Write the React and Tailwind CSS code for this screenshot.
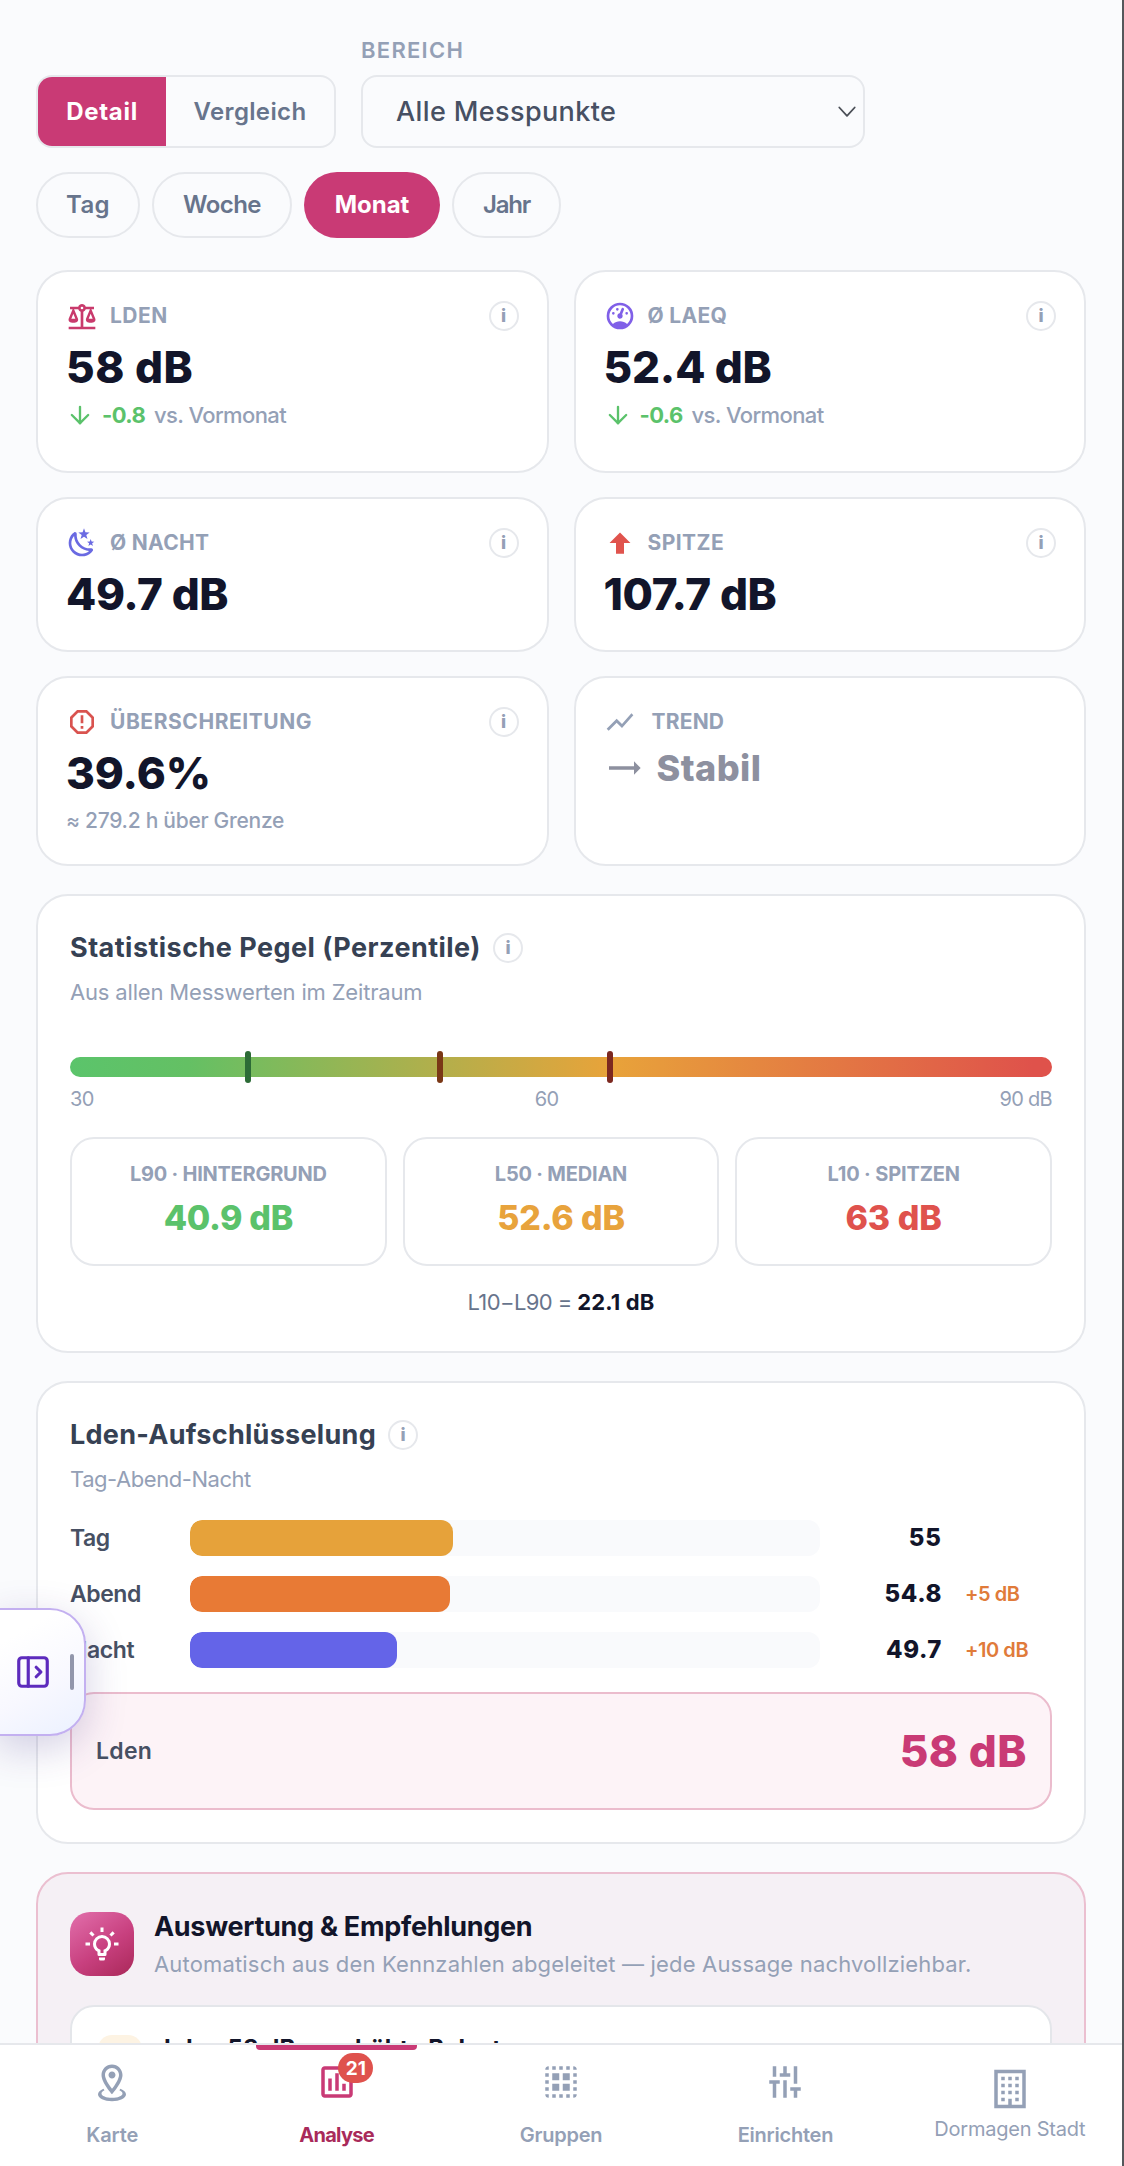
import React from "react";
import { ArrowDown, PanelLeftOpen } from "lucide-react";

const paths = {
  scale: "M12,3C10.73,3 9.6,3.8 9.18,5H3V7H4.95L2,14C1.53,16 3,17 5.5,17C8,17 9.56,16 9,14L6.05,7H9.17C9.5,7.85 10.15,8.5 11,8.83V20H2V22H22V20H13V8.82C13.85,8.5 14.5,7.85 14.82,7H17.95L15,14C14.53,16 16,17 18.5,17C21,17 22.56,16 22,14L19.05,7H21V5H14.83C14.4,3.8 13.27,3 12,3M12,5A1,1 0 0,1 13,6A1,1 0 0,1 12,7A1,1 0 0,1 11,6A1,1 0 0,1 12,5M5.5,10.25L7,14H4L5.5,10.25M18.5,10.25L20,14H17L18.5,10.25Z",
  gauge: "M12,2A10,10 0 0,0 2,12A10,10 0 0,0 12,22A10,10 0 0,0 22,12A10,10 0 0,0 12,2M12,4A8,8 0 0,1 20,12C20,14.4 19,16.5 17.3,18C15.9,16.7 14,16 12,16C10,16 8.2,16.7 6.7,18C5,16.5 4,14.4 4,12A8,8 0 0,1 12,4M14,5.89C13.62,5.9 13.26,6.15 13.1,6.54L11.81,9.77L11.71,10C11,10.13 10.41,10.6 10.14,11.26C9.73,12.29 10.23,13.45 11.26,13.86C12.29,14.27 13.45,13.77 13.86,12.74C14.12,12.08 14,11.32 13.57,10.76L13.67,10.5L14.96,7.29L14.97,7.26C15.17,6.75 14.92,6.17 14.41,5.96C14.28,5.91 14.15,5.89 14,5.89M10,6A1,1 0 0,0 9,7A1,1 0 0,0 10,8A1,1 0 0,0 11,7A1,1 0 0,0 10,6M7,9A1,1 0 0,0 6,10A1,1 0 0,0 7,11A1,1 0 0,0 8,10A1,1 0 0,0 7,9M17,9A1,1 0 0,0 16,10A1,1 0 0,0 17,11A1,1 0 0,0 18,10A1,1 0 0,0 17,9Z",
  night: "M17.75,4.09L15.22,6.03L16.13,9.09L13.5,7.28L10.87,9.09L11.78,6.03L9.25,4.09L12.44,4L13.5,1L14.56,4L17.75,4.09M21.25,11L19.61,12.25L20.2,14.23L18.5,13.06L16.8,14.23L17.39,12.25L15.75,11L17.81,10.95L18.5,9L19.19,10.95L21.25,11M18.97,15.95C19.8,15.87 20.69,17.05 20.16,17.8C19.84,18.25 19.5,18.67 19.08,19.07C15.17,23 8.84,23 4.94,19.07C1.03,15.17 1.03,8.83 4.94,4.93C5.34,4.53 5.76,4.17 6.21,3.85C6.96,3.32 8.14,4.21 8.06,5.04C7.79,7.9 8.75,10.87 10.95,13.06C13.14,15.26 16.1,16.22 18.97,15.95M17.33,17.97C14.5,17.81 11.7,16.64 9.53,14.5C7.36,12.31 6.2,9.5 6.04,6.68C3.23,9.82 3.34,14.64 6.35,17.66C9.37,20.67 14.19,20.78 17.33,17.97Z",
  arrowUp: "M15,20H9V12H4.16L12,4.16L19.84,12H15V20Z",
  octagon: "M8.27,3L3,8.27V15.73L8.27,21H15.73L21,15.73V8.27L15.73,3M9.1,5H14.9L19,9.1V14.9L14.9,19H9.1L5,14.9V9.1M11,15H13V17H11V15M11,7H13V13H11V7",
  line: "M3.5,18.49L9.5,12.48L13.5,16.48L22,6.92L20.59,5.51L13.5,13.48L9.5,9.48L2,16.99Z",
  neutral: "M22,12L18,8V11H3V13H18V16L22,12Z",
  bulb: "M20,11H23V13H20V11M1,11H4V13H1V11M13,1V4H11V1H13M4.92,3.5L7.05,5.64L5.63,7.05L3.5,4.93L4.92,3.5M16.95,5.63L19.07,3.5L20.5,4.93L18.37,7.05L16.95,5.63M12,6A6,6 0 0,1 18,12C18,14.22 16.79,16.16 15,17.2V19A1,1 0 0,1 14,20H10A1,1 0 0,1 9,19V17.2C7.21,16.16 6,14.22 6,12A6,6 0 0,1 12,6M14,21V22A1,1 0 0,1 13,23H11A1,1 0 0,1 10,22V21H14M11,18H13V15.87C14.73,15.43 16,13.86 16,12A4,4 0 0,0 12,8A4,4 0 0,0 8,12C8,13.86 9.27,15.43 11,15.87V18Z",
  marker: "M12 4C14.2 4 16 5.8 16 8C16 10.1 13.9 13.5 12 15.9C10.1 13.4 8 10.1 8 8C8 5.8 9.8 4 12 4M12 2C8.7 2 6 4.7 6 8C6 12.5 12 19 12 19S18 12.4 18 8C18 4.7 15.3 2 12 2M12 6C10.9 6 10 6.9 10 8S10.9 10 12 10 14 9.1 14 8 13.1 6 12 6M20 19C20 21.2 16.4 23 12 23S4 21.2 4 19C4 17.7 5.2 16.6 7.1 15.8L7.7 16.7C6.7 17.2 6 17.8 6 18.5C6 19.9 8.7 21 12 21S18 19.9 18 18.5C18 17.8 17.3 17.2 16.2 16.7L16.8 15.8C18.8 16.6 20 17.7 20 19Z",
  chart: "M9 17H7V10H9V17M13 17H11V7H13V17M17 17H15V13H17V17M19 19H5V5H19V19.1M19 3H5C3.9 3 3 3.9 3 5V19C3 20.1 3.9 21 5 21H19C20.1 21 21 20.1 21 19V5C21 3.9 20.1 3 19 3Z",
  group: "M5 3A2 2 0 0 0 3 5H5M7 3V5H9V3M11 3V5H13V3M15 3V5H17V3M19 3V5H21A2 2 0 0 0 19 3M3 7V9H5V7M7 7V11H11V7M13 7V11H17V7M19 7V9H21V7M3 11V13H5V11M19 11V13H21V11M7 13V17H11V13M13 13V17H17V13M3 15V17H5V15M19 15V17H21V15M3 19A2 2 0 0 0 5 21V19M7 19V21H9V19M11 19V21H13V19M15 19V21H17V19M19 19V21A2 2 0 0 0 21 19Z",
  tune: "M5 3V9H7V3H5M17 3V13H19V3H17M3 11V13H5V21H7V13H9V11H3M15 7H13V3H11V7H9V9H15V7M11 21H13V11H11V21M15 15V17H17V21H19V17H21V15H15Z",
  building: "M19 3V21H13V17.5H11V21H5V3H19M15 7H17V5H15V7M11 7H13V5H11V7M7 7H9V5H7V7M15 11H17V9H15V11M11 11H13V9H11V11M7 11H9V9H7V11M15 15H17V13H15V15M11 15H13V13H11V15M7 15H9V13H7V15M15 19H17V17H15V19M7 19H9V17H7V19M21 1H3V23H21V1Z",
};

function Icon({ name, className }) {
  return (
    <svg viewBox="0 0 24 24" fill="currentColor" className={`shrink-0 ${className}`}>
      <path d={paths[name]} />
    </svg>
  );
}

function Info() {
  return (
    <span className="flex h-[30px] w-[30px] shrink-0 items-center justify-center rounded-full border-2 border-[#e6e8ec] text-[18px] leading-none font-extrabold text-[#94a0b6]">
      i
    </span>
  );
}

function Metric({ icon, iconColor, label, labelClass, value, valueClass, children }) {
  return (
    <div className="rounded-[32px] border-2 border-[#e6e8ec] bg-white px-[28px] pt-[29px]">
      <div className="flex h-[30px] items-center gap-[12px]">
        <Icon name={icon} className={`h-[32px] w-[32px] ${iconColor}`} />
        <span className={`flex-1 text-[21px] font-bold text-[#94a0b6] ${labelClass}`}>{label}</span>
        <Info />
      </div>
      <div className={`mt-[10px] text-[44px] leading-[52px] font-extrabold whitespace-nowrap text-[#12152a] ${valueClass}`}>{value}</div>
      {children}
    </div>
  );
}

function Delta({ value }) {
  return (
    <div className="mt-[7px] flex h-[30px] items-center text-[22px]">
      <ArrowDown size={28} strokeWidth={2} className="mr-[8px] text-[#5bc26b]" />
      <span className="w-[52px] font-bold tracking-[-0.6px] text-[#5bc26b]">{value}</span>
      <span className="font-medium tracking-[-0.6px] text-[#94a0b6]">vs. Vormonat</span>
    </div>
  );
}

function Percentile({ label, labelClass, value, color }) {
  return (
    <div className="h-[129px] rounded-[24px] border-2 border-[#e6e8ec] bg-white pt-[22px] text-center whitespace-nowrap">
      <div className={`text-[20px] leading-[26px] font-bold text-[#94a0b6] ${labelClass}`}>{label}</div>
      <div className={`mt-[11px] text-[34px] leading-[40px] font-extrabold ${color}`}>{value}</div>
    </div>
  );
}

function LevelRow({ label, labelClass, width, color, value, valueClass, extra }) {
  return (
    <div className="flex h-[36px] items-center">
      <span className={`w-[120px] text-[23px] font-semibold text-[#475063] ${labelClass}`}>{label}</span>
      <span className="h-[36px] w-[630px] overflow-hidden rounded-[12px] bg-[#f9fafc]">
        <span className={`block h-full rounded-[12px] ${width} ${color}`} />
      </span>
      <span className={`w-[122px] text-right text-[24px] font-extrabold text-[#12152a] ${valueClass}`}>{value}</span>
      <span className="ml-[23px] text-[20px] font-semibold tracking-[-0.45px] text-[#e07b3a]">{extra}</span>
    </div>
  );
}

function NavItem({ icon, label, className = "pt-[16px]", labelClass, active, badge }) {
  return (
    <div className={`relative flex flex-1 flex-col items-center whitespace-nowrap ${className} ${active ? "text-[#c93a75]" : "text-[#94a0b6]"}`}>
      {active && <span className="absolute top-0 left-[32px] h-[5px] w-[161px] rounded-b-[4px] bg-[#c93a75]" />}
      <Icon name={icon} className="h-[42px] w-[42px]" />
      {badge && (
        <span className="absolute top-[8px] left-[114px] flex h-[30px] w-[35px] items-center justify-center rounded-full bg-[#df524d] text-[19px] leading-none font-bold text-white">
          {badge}
        </span>
      )}
      <span className={`text-[20px] leading-[26px] ${labelClass}`}>{label}</span>
    </div>
  );
}

export default function App() {
  return (
    <div className="relative flex h-[2166px] w-[1124px] overflow-hidden bg-[#fafbfd] font-[Inter,sans-serif]">
      <div className="flex w-[1122px] flex-col">
        <main className="flex h-[2043px] shrink-0 flex-col overflow-hidden px-[36px] pt-[36px]">
          <div className="flex shrink-0 items-end gap-[25px]">
            <div className="flex h-[73px] w-[300px] shrink-0 overflow-hidden rounded-[16px] border-2 border-[#e6e8ec] text-[24px]">
              <span className="flex w-[128px] items-center justify-center bg-[#c93a75] font-bold tracking-[0.7px] text-white">Detail</span>
              <span className="flex flex-1 items-center justify-center font-semibold tracking-[0.35px] text-[#67748c]">Vergleich</span>
            </div>
            <div className="w-[504px]">
              <div className="mb-[11px] text-[22px] leading-[28px] font-semibold tracking-[1.28px] text-[#94a0b6]">BEREICH</div>
              <div className="flex h-[73px] items-center justify-between rounded-[16px] border-2 border-[#e6e8ec] pr-[7px] pl-[33px]">
                <span className="pt-[2px] text-[27px] font-medium tracking-[0.39px] text-[#475063]">Alle Messpunkte</span>
                <svg viewBox="0 0 18 12" className="h-[12px] w-[18px]" fill="none" stroke="#4b4f57" strokeWidth="1.8" strokeLinecap="round" strokeLinejoin="round">
                  <path d="M1.3 1.5L9 9.8L16.7 1.5" />
                </svg>
              </div>
            </div>
          </div>

          <div className="mt-[24px] flex h-[66px] shrink-0 gap-[12px] text-[24px] font-semibold text-[#67748c]">
            <span className="flex w-[104px] items-center justify-center rounded-full border-2 border-[#e6e8ec] tracking-[0.3px]">Tag</span>
            <span className="flex w-[140px] items-center justify-center rounded-full border-2 border-[#e6e8ec] tracking-[-0.54px]">Woche</span>
            <span className="flex w-[136px] items-center justify-center rounded-full bg-[#c93a75] font-bold text-white">Monat</span>
            <span className="flex w-[109px] items-center justify-center rounded-full border-2 border-[#e6e8ec] tracking-[-1.2px]">Jahr</span>
          </div>

          <div className="mt-[32px] grid shrink-0 grid-cols-2 grid-rows-[203px_155px_190px] gap-x-[25px] gap-y-[24px]">
            <Metric icon="scale" iconColor="text-[#c93a6c]" label="LDEN" labelClass="tracking-[0.5px]" value="58 dB" valueClass="tracking-[0.5px]">
              <Delta value="-0.8" />
            </Metric>
            <Metric icon="gauge" iconColor="text-[#8060e8]" label="Ø LAEQ" labelClass="tracking-[0.3px]" value="52.4 dB" valueClass="tracking-[-0.2px]">
              <Delta value="-0.6" />
            </Metric>
            <Metric icon="night" iconColor="text-[#6a6ae2]" label="Ø NACHT" labelClass="tracking-[0.3px]" value="49.7 dB" valueClass="tracking-[-0.41px]" />
            <Metric icon="arrowUp" iconColor="text-[#e0534d]" label="SPITZE" labelClass="tracking-[0.45px]" value="107.7 dB" valueClass="tracking-[-0.44px]" />
            <Metric icon="octagon" iconColor="text-[#d9534f]" label="ÜBERSCHREITUNG" labelClass="tracking-[0.55px]" value="39.6%" valueClass="tracking-[-0.06px]">
              <div className="mt-[7px] text-[21px] leading-[30px] font-medium tracking-[-0.28px] text-[#94a0b6]">≈ 279.2 h über Grenze</div>
            </Metric>
            <div className="rounded-[32px] border-2 border-[#e6e8ec] bg-white px-[28px] pt-[29px]">
              <div className="flex h-[30px] items-center gap-[16px] text-[#94a0b6]">
                <Icon name="line" className="h-[32px] w-[32px]" />
                <span className="text-[21px] font-bold tracking-[0.2px]">TREND</span>
              </div>
              <div className="mt-[9px] flex h-[44px] items-center gap-[13px] text-[#8d909f]">
                <Icon name="neutral" className="h-[40px] w-[40px]" />
                <span className="text-[36px] leading-[44px] font-extrabold tracking-[0.44px]">Stabil</span>
              </div>
            </div>
          </div>

          <section className="mt-[28px] h-[459px] shrink-0 rounded-[32px] border-2 border-[#e6e8ec] bg-white px-[32px] pt-[37px]">
            <div className="flex h-[30px] items-center gap-[12px]">
              <h2 className="text-[27px] font-bold tracking-[0.46px] text-[#364153]">Statistische Pegel (Perzentile)</h2>
              <Info />
            </div>
            <p className="mt-[14px] text-[22px] leading-[30px] tracking-[-0.17px] text-[#94a0b6]">Aus allen Messwerten im Zeitraum</p>
            <div className="relative mt-[50px] h-[20px] rounded-full bg-[linear-gradient(90deg,#5bc46b_0%,#64c064_12%,#e8a33a_55%,#df524b_98%)]">
              <span className="absolute top-[-6px] left-[175px] h-[32px] w-[6px] rounded-full bg-[#2c6b36]" />
              <span className="absolute top-[-6px] left-[367px] h-[32px] w-[6px] rounded-full bg-[#7a3816]" />
              <span className="absolute top-[-6px] left-[537px] h-[32px] w-[6px] rounded-full bg-[#7c2820]" />
            </div>
            <div className="mt-[9px] flex justify-between text-[20px] leading-[26px] tracking-[-0.7px] text-[#94a0b6]">
              <span>30</span>
              <span>60</span>
              <span>90 dB</span>
            </div>
            <div className="mt-[25px] grid grid-cols-3 gap-[16px]">
              <Percentile label="L90 · HINTERGRUND" labelClass="tracking-[-0.25px]" value="40.9 dB" color="tracking-[-0.35px] text-[#5bc26b]" />
              <Percentile label="L50 · MEDIAN" labelClass="tracking-[-0.2px]" value="52.6 dB" color="tracking-[-0.2px] text-[#e8a33c]" />
              <Percentile label="L10 · SPITZEN" labelClass="tracking-[-0.15px]" value="63 dB" color="text-[#df524d]" />
            </div>
            <p className="mt-[21px] text-center text-[22px] leading-[30px] text-[#67748c]">
              <span className="tracking-[-0.6px]">L10−L90 = </span>
              <b className="font-bold tracking-[0.16px] text-[#12152a]">22.1 dB</b>
            </p>
          </section>

          <section className="mt-[28px] h-[463px] shrink-0 rounded-[32px] border-2 border-[#e6e8ec] bg-white px-[32px] pt-[37px]">
            <div className="flex h-[30px] items-center gap-[12px]">
              <h2 className="text-[27px] font-bold tracking-[0.28px] text-[#364153]">Lden-Aufschlüsselung</h2>
              <Info />
            </div>
            <p className="mt-[14px] text-[22px] leading-[30px] tracking-[-0.45px] text-[#94a0b6]">Tag-Abend-Nacht</p>
            <div className="mt-[26px] flex flex-col gap-[20px]">
              <LevelRow label="Tag" labelClass="tracking-[-0.5px]" width="w-[263px]" color="bg-[#e6a23a]" value="55" valueClass="tracking-[1px]" />
              <LevelRow label="Abend" labelClass="tracking-[-0.44px]" width="w-[260px]" color="bg-[#e87a35]" value="54.8" valueClass="tracking-[0.6px]" extra="+5 dB" />
              <LevelRow label="Nacht" labelClass="tracking-[-0.44px]" width="w-[207px]" color="bg-[#6464e8]" value="49.7" valueClass="tracking-[0.6px]" extra="+10 dB" />
            </div>
            <div className="mt-[24px] flex h-[118px] items-center justify-between rounded-[24px] border-2 border-[#ebbccd] bg-[#fdf3f7] pr-[23px] pl-[24px]">
              <span className="text-[23px] font-semibold tracking-[0.28px] text-[#475063]">Lden</span>
              <span className="text-[44px] font-extrabold tracking-[0.5px] text-[#c93a75]">58 dB</span>
            </div>
          </section>

          <section className="mt-[28px] h-[300px] shrink-0 rounded-[32px] border-2 border-[#ebbfd0] bg-[#f5f0f5] px-[32px] pt-[38px]">
            <div className="flex h-[64px] gap-[20px]">
              <span className="flex h-[64px] w-[64px] shrink-0 items-center justify-center rounded-[20px] bg-[linear-gradient(145deg,#e270ac,#c8407f_55%,#a92858)] text-white">
                <Icon name="bulb" className="h-[36px] w-[36px]" />
              </span>
              <div className="whitespace-nowrap">
                <h2 className="text-[27px] leading-[30px] font-bold tracking-[-0.3px] text-[#12152a]">Auswertung &amp; Empfehlungen</h2>
                <p className="mt-[7px] text-[22px] leading-[30px] tracking-[0.17px] text-[#94a0b6]">
                  Automatisch aus den Kennzahlen abgeleitet — jede Aussage nachvollziehbar.
                </p>
              </div>
            </div>
            <div className="mt-[29px] flex h-[160px] shrink-0 gap-[22px] rounded-[24px] border-2 border-[#e4e6ea] bg-white px-[26px] pt-[28px]">
              <span className="h-[44px] w-[44px] rounded-[14px] bg-[#fdf3e3]" />
              <span className="mt-[-2px] text-[24px] leading-[32px] font-bold text-[#12152a]">Lden 58 dB — erhöhte Belastung</span>
            </div>
          </section>
        </main>

        <nav className="flex h-[123px] shrink-0 border-t-2 border-[#e6e8ec] bg-white">
          <NavItem icon="marker" label="Karte" labelClass="mt-[19px] font-semibold tracking-[-0.13px]" />
          <NavItem icon="chart" label="Analyse" labelClass="mt-[19px] font-bold tracking-[-0.74px] text-[#a92a5a]" active badge="21" />
          <NavItem icon="group" label="Gruppen" labelClass="mt-[19px] font-semibold tracking-[-0.26px]" />
          <NavItem icon="tune" label="Einrichten" labelClass="mt-[19px] font-semibold tracking-[-0.23px]" />
          <NavItem icon="building" label="Dormagen Stadt" className="pt-[23px]" labelClass="mt-[6px] font-normal tracking-[-0.23px]" />
        </nav>
      </div>
      <div className="w-[2px] bg-[#55575b]" />

      <div className="absolute top-[1608px] left-[-4px] flex h-[128px] w-[90px] items-center rounded-r-[36px] border-2 border-[#c3b0f0] bg-[linear-gradient(150deg,#ffffff_20%,#f8f8ff_60%,#ebf1ff)] pl-[16px] shadow-[0_12px_40px_rgba(60,40,130,0.22)]">
        <PanelLeftOpen size={38} strokeWidth={2} className="text-[#5d2bbd]" />
        <span className="ml-[18px] h-[36px] w-[4px] rounded-full bg-[#9296ab]" />
      </div>
    </div>
  );
}
